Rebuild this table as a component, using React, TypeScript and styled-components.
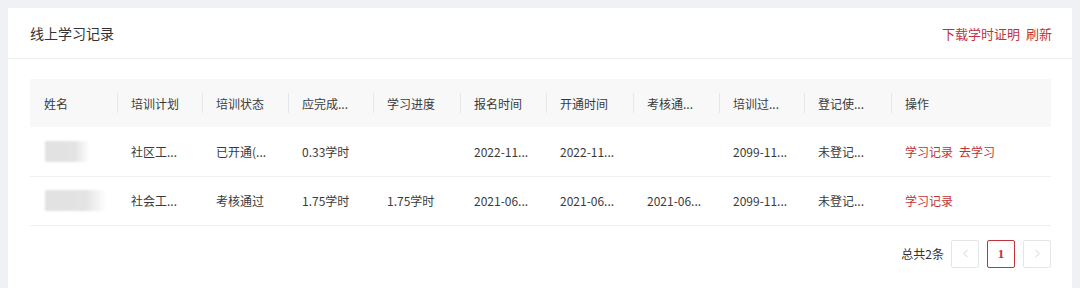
import React from "react";
import styled, { createGlobalStyle } from "styled-components";
import { ChevronLeft, ChevronRight } from "lucide-react";

const GlobalStyle = createGlobalStyle`
  html, body {
    margin: 0;
    padding: 0;
    background: #f0f1f5;
  }
  body {
    font-family: "Noto Sans CJK SC", "Noto Sans", "Liberation Sans", sans-serif;
    color: #333;
  }
`;

const Page = styled.div`
  padding: 8px 8px 0 8px;
`;

const Card = styled.section`
  width: 1064px;
  height: 280px;
  background: #fff;
  box-sizing: border-box;
`;

const CardHeader = styled.header`
  height: 51px;
  box-sizing: border-box;
  display: flex;
  align-items: center;
  justify-content: space-between;
  padding: 0 20px 0 22px;
  border-bottom: 1px solid #eeeff2;
`;

const Title = styled.h2`
  margin: 0;
  font-size: 14px;
  font-weight: 400;
  color: #333;
`;

const Actions = styled.div`
  display: flex;
  gap: 6px;
`;

const LinkText = styled.a<{ $size?: number }>`
  font-size: ${(p) => p.$size ?? 12}px;
  color: #c0333a;
  cursor: pointer;
  text-decoration: none;
`;

const CardBody = styled.div`
  padding: 20px 21px 0 22px;
`;

const Table = styled.table`
  width: 1021px;
  table-layout: fixed;
  border-collapse: collapse;
  font-size: 12px;
`;

const HeadRow = styled.tr`
  height: 48px;
  background: #f8f8f9;
`;

const HeadCell = styled.th<{ $first?: boolean }>`
  position: relative;
  text-align: left;
  font-weight: 400;
  color: #3a3a3a;
  padding: 0 4px 0 14px;
  white-space: nowrap;
  &::before {
    content: "";
    display: ${(p) => (p.$first ? "none" : "block")};
    position: absolute;
    left: 0;
    top: 14px;
    width: 1px;
    height: 20px;
    background: #e6e7ea;
  }
`;

const BodyRow = styled.tr`
  height: 49px;
  border-bottom: 1px solid #eeeff2;
`;

const Cell = styled.td`
  padding: 0 4px 0 14px;
  white-space: nowrap;
  color: #3a3a3a;
`;

const Masked = styled.div<{ $w: number }>`
  width: ${(p) => p.$w}px;
  height: 21px;
  margin-left: 1px;
  background: linear-gradient(90deg, #e2e2e2 0%, #e3e3e3 65%, rgba(235, 235, 235, 0) 100%);
  filter: blur(1.2px);
`;

const OpLinks = styled.div`
  display: flex;
  gap: 6px;
`;

const Pager = styled.nav`
  display: flex;
  justify-content: flex-end;
  align-items: center;
  gap: 8px;
  margin-top: 14px;
  font-size: 12px;
`;

const Total = styled.span`
  color: #333;
  margin-right: -1px;
`;

const PageButton = styled.button<{ $active?: boolean }>`
  width: 28px;
  height: 28px;
  box-sizing: border-box;
  padding: 0;
  display: flex;
  align-items: center;
  justify-content: center;
  background: #fff;
  border: 1px solid ${(p) => (p.$active ? "#c0333a" : "#e4e5e8")};
  border-radius: 2px;
  color: ${(p) => (p.$active ? "#c0333a" : "#c4c6cc")};
  font-family: "Liberation Serif", serif;
  font-weight: 700;
  font-size: 13px;
`;

type Row = {
  maskWidth: number;
  cells: string[];
  ops: string[];
};

// Column titles and cell values are shown in their shortened table form.
const columns = [
  { title: "姓名", width: 87 },
  { title: "培训计划", width: 85 },
  { title: "培训状态", width: 86 },
  { title: "应完成...", width: 85 },
  { title: "学习进度", width: 87 },
  { title: "报名时间", width: 86 },
  { title: "开通时间", width: 87 },
  { title: "考核通...", width: 86 },
  { title: "培训过...", width: 85 },
  { title: "登记使...", width: 87 },
  { title: "操作", width: 160 },
];

const rows: Row[] = [
  {
    maskWidth: 45,
    cells: ["社区工...", "已开通(...", "0.33学时", "", "2022-11...", "2022-11...", "", "2099-11...", "未登记..."],
    ops: ["学习记录", "去学习"],
  },
  {
    maskWidth: 62,
    cells: ["社会工...", "考核通过", "1.75学时", "1.75学时", "2021-06...", "2021-06...", "2021-06...", "2099-11...", "未登记..."],
    ops: ["学习记录"],
  },
];

export default function App() {
  return (
    <>
      <GlobalStyle />
      <Page>
        <Card>
          <CardHeader>
            <Title>线上学习记录</Title>
            <Actions>
              <LinkText $size={13}>下载学时证明</LinkText>
              <LinkText $size={13}>刷新</LinkText>
            </Actions>
          </CardHeader>
          <CardBody>
            <Table>
              <colgroup>
                {columns.map((c) => (
                  <col key={c.title} style={{ width: c.width }} />
                ))}
              </colgroup>
              <thead>
                <HeadRow>
                  {columns.map((c, i) => (
                    <HeadCell key={c.title} $first={i === 0}>
                      {c.title}
                    </HeadCell>
                  ))}
                </HeadRow>
              </thead>
              <tbody>
                {rows.map((r, i) => (
                  <BodyRow key={i}>
                    <Cell>
                      <Masked $w={r.maskWidth} />
                    </Cell>
                    {r.cells.map((c, j) => (
                      <Cell key={j}>{c}</Cell>
                    ))}
                    <Cell>
                      <OpLinks>
                        {r.ops.map((o) => (
                          <LinkText key={o}>{o}</LinkText>
                        ))}
                      </OpLinks>
                    </Cell>
                  </BodyRow>
                ))}
              </tbody>
            </Table>
            <Pager>
              <Total>总共2条</Total>
              <PageButton aria-label="上一页">
                <ChevronLeft size={13} strokeWidth={1.5} />
              </PageButton>
              <PageButton $active>1</PageButton>
              <PageButton aria-label="下一页">
                <ChevronRight size={13} strokeWidth={1.5} />
              </PageButton>
            </Pager>
          </CardBody>
        </Card>
      </Page>
    </>
  );
}
